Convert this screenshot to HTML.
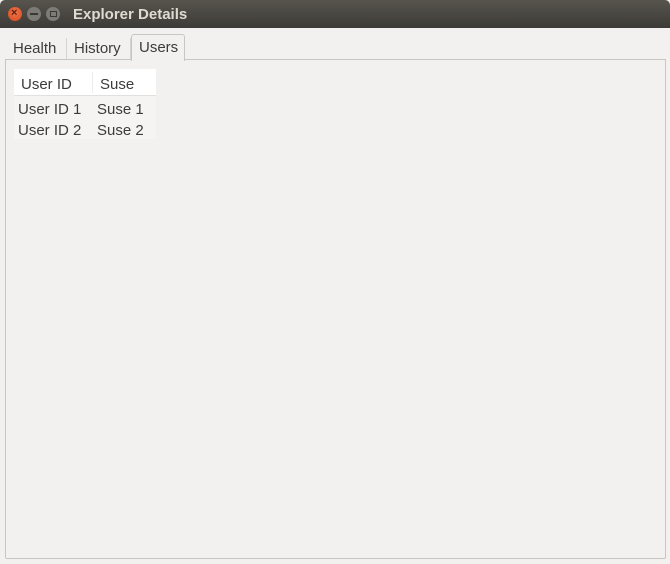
<!DOCTYPE html>
<html><head><meta charset="utf-8"><style>
*{margin:0;padding:0;box-sizing:border-box}
body{width:670px;height:564px;background:#f2f1f0;font-family:"Liberation Sans","DejaVu Sans",sans-serif;position:relative;overflow:hidden;color:#3c3c3c}
.tb{position:absolute;left:0;top:0;width:670px;height:28px;background:linear-gradient(#57544e,#3d3b37);border-radius:5px 5px 0 0}
.tb .t{position:absolute;left:73px;top:6px;color:#dfdbd2;font-weight:bold;font-size:15px}
.b{position:absolute;top:7px;width:14px;height:14px;border-radius:50%}
.tab{position:absolute;font-size:15px;color:#3c3c3c}
.pane{position:absolute;left:5px;top:59px;width:661px;height:500px;border:1px solid #c8c6c3;border-radius:0 0 2px 2px}
.tbl{position:absolute;left:14px;top:69px;width:142px;height:70px;background:#f5f4f3}
.hd{position:absolute;left:0;top:0;width:142px;height:27px;background:#fff;border-bottom:1px solid #e2e0de}
.c{position:absolute;font-size:15px;color:#3c3c3c}
</style></head><body>
<div class="tb">
<div class="b" style="left:8px;background:radial-gradient(circle at 50% 40%,#f2734a,#d24b1e);"></div>
<div style="position:absolute;left:11px;top:7px;color:#5a2010;font-size:11px;font-weight:bold">×</div>
<div class="b" style="left:27px;background:#7d7b76"></div>
<div style="position:absolute;left:30px;top:13px;width:8px;height:2px;background:#3a3935"></div>
<div class="b" style="left:46px;background:#7d7b76"></div>
<div style="position:absolute;left:50px;top:11px;width:7px;height:6px;border:1px solid #3a3935"></div>
<div class="t">Explorer Details</div>
</div>
<div class="pane"></div>
<div style="position:absolute;left:66px;top:38px;width:1px;height:21px;background:#d6d4d1"></div>
<div style="position:absolute;left:130px;top:38px;width:1px;height:21px;background:#d6d4d1"></div>
<div class="tab" style="left:13px;top:40px">Health</div>
<div class="tab" style="left:74px;top:40px">History</div>
<div style="position:absolute;left:131px;top:34px;width:54px;height:27px;border:1px solid #c8c6c3;border-bottom:none;border-radius:3px 3px 0 0;background:#f2f1f0"></div>
<div class="tab" style="left:139px;top:39px">Users</div>
<div class="tbl">
<div class="hd"></div>
<div style="position:absolute;left:78px;top:3px;width:1px;height:21px;background:#ececea"></div>
<div class="c" style="left:7px;top:7px">User ID</div>
<div class="c" style="left:86px;top:7px">Suse</div>
<div class="c" style="left:4px;top:32px">User ID 1</div>
<div class="c" style="left:83px;top:32px">Suse 1</div>
<div class="c" style="left:4px;top:53px">User ID 2</div>
<div class="c" style="left:83px;top:53px">Suse 2</div>
</div>
</body></html>
